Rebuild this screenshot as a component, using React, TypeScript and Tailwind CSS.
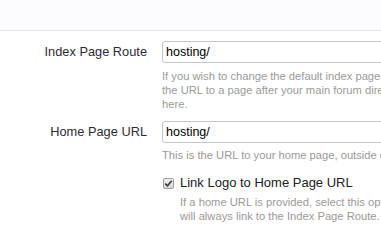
import React from "react";

const font = { fontFamily: '"Liberation Sans", Arial, sans-serif' };

function TextBox({ value }: { value: string }) {
  return (
    <div className="h-[22px] w-[260px] shrink-0 rounded-[3px] border border-[#c6c6c6] bg-white px-[3px] flex items-center text-[12.5px] text-black">
      {value}
    </div>
  );
}

function Hint({ lines, className = "" }: { lines: string[]; className?: string }) {
  return (
    <div className={"text-[11.2px] leading-[14px] text-[#9a9a9a] " + className}>
      {lines.map((l) => (
        <div key={l} className="whitespace-nowrap">
          {l}
        </div>
      ))}
    </div>
  );
}

function Checked() {
  return (
    <span className="flex h-[11px] w-[11px] shrink-0 items-center justify-center rounded-[2px] border border-[#a0a0a0] bg-gradient-to-b from-[#f0f0f0] to-[#d6d6d6]">
      <svg width="9" height="9" viewBox="0 0 9 9">
        <path d="M1.3 4.7 L3.5 6.8 L7.7 1.8" fill="none" stroke="#3a3a3a" strokeWidth="1.6" />
      </svg>
    </span>
  );
}

export default function App() {
  return (
    <div className="h-[242px] w-[381px] overflow-hidden bg-white" style={font}>
      <div className="h-[31px] border-b border-[#d8eded] bg-[#fcfbfd]"></div>

      <div className="mt-[10px] flex">
        <div className="w-[147px] shrink-0 h-[22px] flex items-center justify-end text-[12.8px] text-[#2f2b38]">
          Index Page Route
        </div>
        <div className="ml-[15px]">
          <TextBox value="hosting/" />
          <Hint
            className="mt-[6px]"
            lines={[
              "If you wish to change the default index page route",
              "the URL to a page after your main forum directory",
              "here.",
            ]}
          />
        </div>
      </div>

      <div className="mt-[10px] flex">
        <div className="w-[147px] shrink-0 h-[22px] flex items-center justify-end text-[12.8px] text-[#2f2b38]">
          Home Page URL
        </div>
        <div className="ml-[15px]">
          <TextBox value="hosting/" />
          <Hint className="mt-[5px]" lines={["This is the URL to your home page, outside of the forum."]} />
          <div className="mt-[13px] flex items-center gap-[6px] pl-[1px]">
            <Checked />
            <span className="whitespace-nowrap text-[13px] leading-[16px] text-[#222]">Link Logo to Home Page URL</span>
          </div>
          <Hint
            className="mt-[4px] pl-[18px] leading-[13px]"
            lines={[
              "If a home URL is provided, select this option to link the logo",
              "will always link to the Index Page Route.",
            ]}
          />
        </div>
      </div>
    </div>
  );
}
